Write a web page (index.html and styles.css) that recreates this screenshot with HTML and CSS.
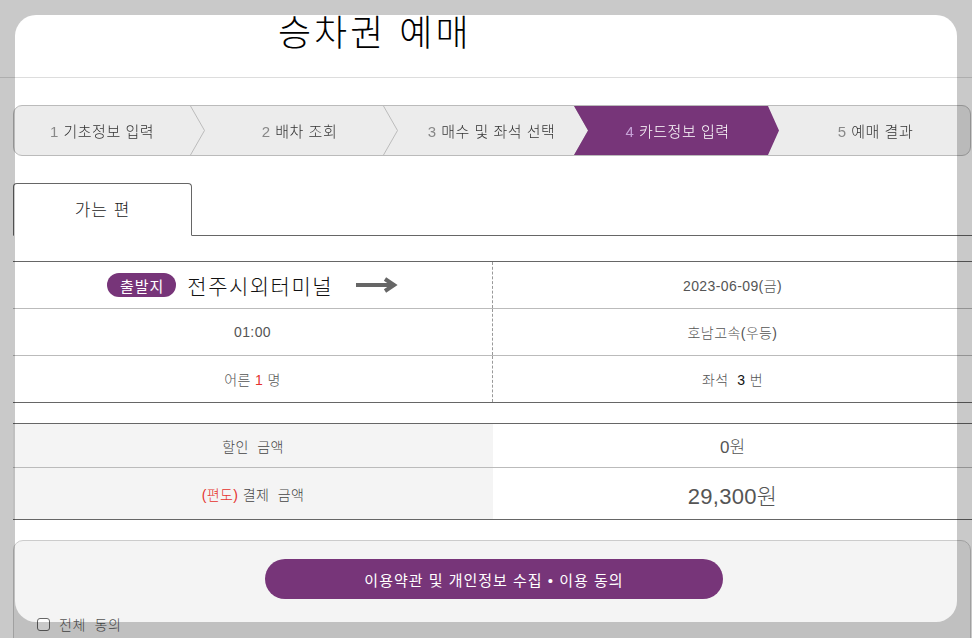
FILE: index.html
```html
<!DOCTYPE html>
<html lang="ko">
<head>
<meta charset="utf-8">
<title>승차권 예매</title>
<link rel="stylesheet" href="styles.css">
</head>
<body>
<div class="page">
  <header class="header">
    <h1 class="title">승차권 예매</h1>
  </header>
  <div class="content">
    <ol class="steps">
      <li class="step sep"><span class="lbl"><span class="num">1</span> 기초정보 입력</span></li>
      <li class="step sep pad-l"><span class="lbl"><span class="num">2</span> 배차 조회</span></li>
      <li class="step sep pad-l"><span class="lbl"><span class="num">3</span> 매수 및 좌석 선택</span></li>
      <li class="step active pad-s"><span class="lbl"><span class="num">4</span> 카드정보 입력</span></li>
      <li class="step pad-s"><span class="lbl"><span class="num">5</span> 예매 결과</span></li>
    </ol>

    <div class="tabs">
      <div class="tab">가는 편</div>
    </div>

    <div class="info">
      <div class="row">
        <div class="cell">
          <span class="badge">출발지</span>
          <span class="terminal">전주시외터미널</span>
          <svg class="arrow" width="42" height="16" viewBox="0 0 42 16"><path d="M0 8H36" stroke="#666" stroke-width="4" fill="none"/><path d="M29 2L38 8L29 14" stroke="#666" stroke-width="4" fill="none"/></svg>
        </div>
        <div class="cell dashed"><span>2023-06-09(금)</span></div>
      </div>
      <div class="row">
        <div class="cell"><span>01:00</span></div>
        <div class="cell dashed"><span>호남고속(우등)</span></div>
      </div>
      <div class="row last">
        <div class="cell"><span>어른 <span class="red">1</span> 명</span></div>
        <div class="cell dashed"><span>좌석&nbsp; <span class="black">3</span> 번</span></div>
      </div>
    </div>

    <div class="price">
      <div class="prow p1">
        <div class="plabel"><span>할인&nbsp; 금액</span></div>
        <div class="pval small"><span>0원</span></div>
      </div>
      <div class="prow p2">
        <div class="plabel"><span><span class="red">(편도)</span> 결제&nbsp; 금액</span></div>
        <div class="pval big"><span>29,300원</span></div>
      </div>
    </div>

    <div class="footer">
      <button class="agree-btn" type="button">이용약관 및 개인정보 수집 • 이용 동의</button>
      <label class="check"><span class="box"></span><span>전체&nbsp; 동의</span></label>
    </div>
  </div>
</div>
<div class="dim"></div>
</body>
</html>
```

FILE: styles.css
```css
* { box-sizing: border-box; }
html, body { margin: 0; padding: 0; }
body {
  width: 972px;
  height: 638px;
  overflow: hidden;
  background: #fff;
  font-family: "Liberation Sans", "Noto Sans CJK KR", sans-serif;
  font-weight: 300;
  color: #555;
}
.page { width: 972px; }

.header {
  height: 78px;
  border-bottom: 1px solid #dddddd;
}
.title {
  margin: 0;
  padding: 13px 0 0 278px;
  font-size: 36px;
  line-height: 42px;
  font-weight: 300;
  letter-spacing: 3px;
  color: #000;
}

.content {
  padding-left: 13px;
  width: 972px;
}

.steps {
  list-style: none;
  margin: 27px 0 0 0;
  padding: 0;
  width: 958px;
  height: 51px;
  border: 1px solid #bbbbbb;
  border-radius: 9px;
  background: #ececec;
  overflow: hidden;
  display: grid;
  grid-template-columns: 176px 193px 191px 194px 1fr;
}
.step {
  position: relative;
  display: flex;
  align-items: center;
  justify-content: center;
  font-size: 15px;
  color: #333;
  white-space: pre;
}
.step .lbl { position: relative; z-index: 3; letter-spacing: 0.5px; }
.step .num { color: #888; }
.step.pad-l { padding-left: 26px; }
.step.pad-s { padding-left: 13px; }
.step.sep::after {
  content: "";
  position: absolute;
  top: 0;
  left: 100%;
  width: 15px;
  height: 100%;
  background: url("data:image/svg+xml,%3Csvg xmlns='http://www.w3.org/2000/svg' viewBox='0 0 15 49' preserveAspectRatio='none'%3E%3Cpolyline points='0.5,0 14.5,24.5 0.5,49' fill='none' stroke='%23bbbbbb' stroke-width='1'/%3E%3C/svg%3E") no-repeat;
  background-size: 100% 100%;
  z-index: 1;
}
.step.active { color: #fff; z-index: 2; }
.step.active::before {
  content: "";
  position: absolute;
  left: 0;
  top: 0;
  bottom: 0;
  width: calc(100% + 11px);
  background: #773579;
  clip-path: polygon(0 0, calc(100% - 11px) 0, 100% 50%, calc(100% - 11px) 100%, 0 100%, 14px 50%);
  z-index: -1;
}
.step.active .num { color: #c7a3d8; }

.tabs {
  margin-top: 27px;
  height: 53px;
  border-bottom: 1px solid #666;
  display: flex;
}
.tab {
  width: 179px;
  height: 53px;
  border: 1px solid #666;
  border-bottom: 1px solid #fff;
  border-radius: 4px 4px 0 0;
  background: #fff;
  display: flex;
  align-items: center;
  justify-content: center;
  font-size: 17px;
  letter-spacing: 1px;
  color: #222;
  padding-bottom: 2px;
}

.info {
  margin-top: 25px;
  border-top: 1px solid #666;
  border-bottom: 1px solid #666;
  width: 959px;
}
.row {
  display: grid;
  grid-template-columns: 479px 1fr;
  height: 47px;
  border-bottom: 1px solid #bbbbbb;
}
.row.last { border-bottom: 0; height: 46px; }
.cell {
  display: flex;
  align-items: center;
  justify-content: center;
  font-size: 14px;
  letter-spacing: 0.4px;
  color: #555;
}
.cell.dashed { border-left: 1px dashed #999; }
.red { color: #e5322d; }
.black { color: #111; }

.badge {
  display: inline-flex;
  align-items: center;
  height: 24px;
  padding: 0 12px 0 13px;
  border-radius: 12px;
  background: #773579;
  color: #fff;
  font-size: 15px;
  letter-spacing: 1px;
  font-weight: 400;
}
.terminal {
  margin-left: 11px;
  font-size: 21px;
  letter-spacing: 1.5px;
  color: #111;
}
.arrow { margin-left: 23px; display: block; }

.price {
  margin-top: 20px;
  border-top: 1px solid #666;
  border-bottom: 1px solid #666;
  width: 959px;
}
.prow {
  display: grid;
  grid-template-columns: 480px 1fr;
}
.prow.p1 { height: 44px; border-bottom: 1px solid #bbbbbb; }
.prow.p2 { height: 51px; }
.plabel {
  background: #f4f4f4;
  display: flex;
  align-items: center;
  justify-content: center;
  font-size: 14px;
  letter-spacing: 0.4px;
  color: #444;
}
.pval {
  display: flex;
  align-items: center;
  justify-content: center;
  color: #555;
}
.pval.small { font-size: 17px; }
.pval.big { font-size: 22px; letter-spacing: 0.3px; }

.footer {
  margin-top: 20px;
  width: 958px;
  height: 140px;
  border: 1px solid #cccccc;
  border-radius: 10px;
  background: #f4f4f4;
  padding: 18px 0 0 23px;
}
.agree-btn {
  display: block;
  margin: 0 0 0 228px;
  width: 458px;
  height: 40px;
  border: 0;
  border-radius: 20px;
  background: #773579;
  color: #fff;
  font-family: "Liberation Sans", "Noto Sans CJK KR", sans-serif;
  font-size: 15px;
  font-weight: 400;
  letter-spacing: 1px;
  padding: 0;
}
.check {
  display: flex;
  align-items: center;
  margin-top: 15px;
  font-size: 14px;
  letter-spacing: 0.5px;
  color: #555;
}
.box {
  width: 13px;
  height: 13px;
  border: 1px solid #666;
  border-radius: 3px;
  background: #fff;
  margin-right: 9px;
}

.dim {
  position: fixed;
  left: 15px;
  top: 15px;
  width: 942px;
  height: 607px;
  border-radius: 21px;
  box-shadow: 0 0 0 1500px rgba(0, 0, 0, 0.21);
  pointer-events: none;
}
```
